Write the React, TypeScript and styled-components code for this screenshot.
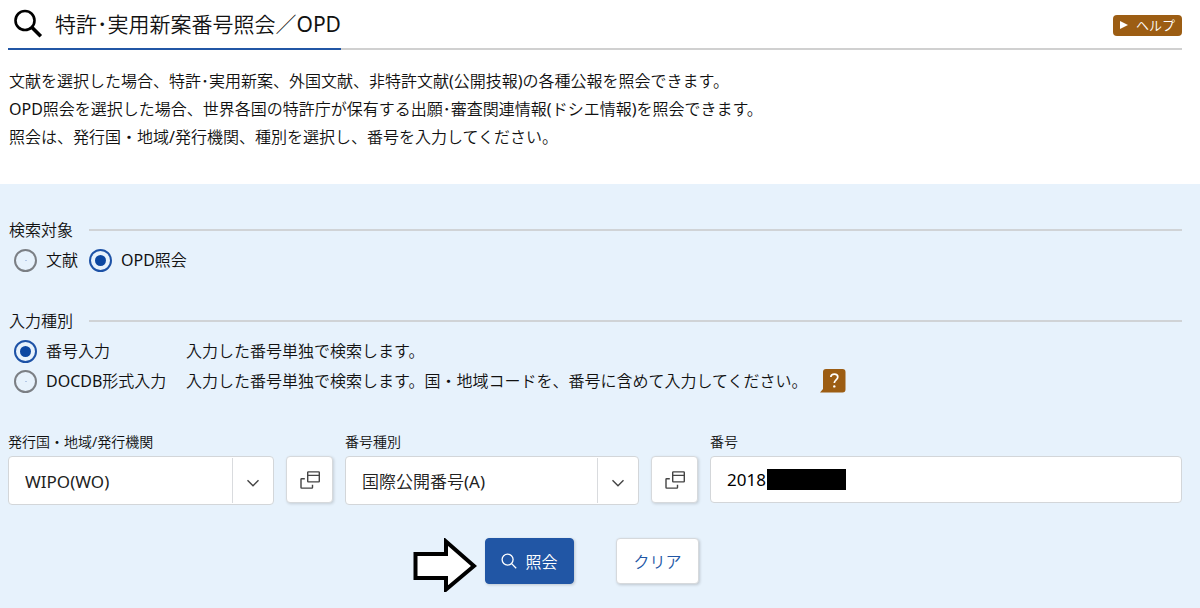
import React from "react";
import styled, { createGlobalStyle } from "styled-components";

const GlobalStyle = createGlobalStyle`
  *, *::before, *::after { box-sizing: border-box; }
  body {
    margin: 0;
    background: #e7f2fc;
    color: #111;
    font-family: "Noto Sans", "Noto Sans CJK JP DemiLight", "Noto Sans CJK JP", sans-serif;
    font-size: 16px;
    font-weight: 400;
  }
  button, input, select { font: inherit; color: inherit; margin: 0; }
`;

const Intro = styled.header`
  background: #fff;
  padding: 0 18px 33px 8px;
`;

const TitleBar = styled.div`
  display: flex;
  align-items: stretch;
  justify-content: space-between;
  height: 50px;
  box-shadow: inset 0 -2px 0 #d0d0d0;
`;

const Title = styled.h1`
  display: flex;
  align-items: center;
  gap: 12px;
  margin: 0;
  padding: 0 0 0 5px;
  border-bottom: 2px solid #2156a5;
  font-size: 21px;
  line-height: 30px;
  font-weight: 400;
`;

const HelpButton = styled.button`
  display: flex;
  align-items: center;
  align-self: center;
  gap: 8px;
  height: 21px;
  padding: 0 7px;
  border: 0;
  border-radius: 4px;
  background: #9c5d13;
  color: #fff;
  font-size: 13px;
  line-height: 20px;
`;

const Lead = styled.p`
  margin: 0;
  padding: 17px 0 0 1px;
  line-height: 28px;
`;

const Form = styled.form`
  padding: 32px 18px 16px 8px;
`;

const Group = styled.fieldset`
  min-width: 0;
  margin: 0 0 32px;
  padding: 0;
  border: 0;
`;

const Legend = styled.legend`
  display: flex;
  align-items: center;
  gap: 16px;
  width: 100%;
  padding: 0 0 1px 1px;
  line-height: 28px;

  &::after {
    content: "";
    flex: 1;
    height: 2px;
    background: #d0d3d6;
  }
`;

const OptionRow = styled.div`
  display: flex;
  align-items: center;
  gap: 11px;
  height: 30px;
  padding-left: 6px;
`;

const Option = styled.label<{ $wide?: boolean }>`
  display: flex;
  align-items: center;
  gap: 9px;
  width: ${(p) => (p.$wide ? "161px" : "auto")};
  line-height: 24px;
  white-space: nowrap;
`;

const Radio = styled.input`
  appearance: none;
  display: grid;
  place-items: center;
  flex: none;
  width: 23px;
  height: 23px;
  border: 2px solid #7b7f84;
  border-radius: 50%;

  &::before {
    content: "";
    width: 2px;
    height: 1px;
    background: #b4c8e6;
  }
  &:checked { border-color: #1d52a6; }
  &:checked::before {
    width: 11px;
    height: 11px;
    border-radius: 50%;
    background: #0c47a1;
  }
`;

const Note = styled.span`
  line-height: 24px;
`;

const HintButton = styled.button`
  display: flex;
  margin-left: 2px;
  padding: 0;
  border: 0;
  background: none;
`;

const Fields = styled.div`
  display: grid;
  grid-template-columns: 325fr 353fr 472fr;
  gap: 12px;
  padding-top: 4px;
`;

const Field = styled.div`
  min-width: 0;
`;

const FieldLabel = styled.label`
  display: block;
  padding-bottom: 4px;
  font-size: 14px;
  line-height: 20px;
`;

const Controls = styled.div`
  display: flex;
  gap: 12px;
`;

const SelectBox = styled.div`
  position: relative;
  flex: 1;
  min-width: 0;
`;

const Select = styled.select`
  appearance: none;
  display: block;
  width: 100%;
  height: 49px;
  padding: 2px 44px 0 16px;
  border: 1px solid #d3d6d9;
  border-radius: 4px;
  background: #fff;
  color: #222;
  font-size: 17px;
`;

const SelectArrow = styled.span`
  position: absolute;
  top: 2px;
  right: 1px;
  bottom: 2px;
  display: grid;
  place-items: center;
  width: 41px;
  padding-top: 4px;
  border-left: 1px solid #d9dbde;
  pointer-events: none;
`;

const PickerButton = styled.button`
  display: grid;
  place-items: center;
  flex: none;
  width: 47px;
  height: 47px;
  padding: 0;
  border: 1px solid #d6d9dc;
  border-radius: 4px;
  background: #fff;
  box-shadow: 1px 1px 3px rgba(0, 0, 0, 0.15);
`;

const NumberBox = styled.div`
  position: relative;
  min-width: 0;
`;

const NumberInput = styled.input`
  display: block;
  width: 100%;
  height: 47px;
  padding: 0 16px;
  border: 1px solid #d3d6d9;
  border-radius: 4px;
  background: #fff;
  color: #000;
  font-size: 17px;
`;

const Redaction = styled.span`
  position: absolute;
  top: 13px;
  left: 57px;
  width: 79px;
  height: 21px;
  background: #000;
`;

const Actions = styled.div`
  display: flex;
  align-items: flex-start;
  justify-content: center;
  margin-top: 33px;
  padding-right: 78px;
`;

const ActionButton = styled.button<{ $primary?: boolean }>`
  display: flex;
  align-items: center;
  justify-content: center;
  gap: 8px;
  width: ${(p) => (p.$primary ? "89px" : "83px")};
  height: 46px;
  margin-left: ${(p) => (p.$primary ? "8px" : "42px")};
  padding: 0;
  border: 1px solid ${(p) => (p.$primary ? "#2156a5" : "#d6d9dc")};
  border-radius: 4px;
  background: ${(p) => (p.$primary ? "#2156a5" : "#fff")};
  color: ${(p) => (p.$primary ? "#fff" : "#2156a5")};
  box-shadow: 1px 1px 3px rgba(0, 0, 0, 0.18);
`;

const ChevronIcon = () => (
  <svg width="14" height="10" viewBox="0 0 14 10" fill="none" stroke="#444" strokeWidth="1.4" aria-hidden="true">
    <path d="M1.500 2.200 7 7.800l5.500-5.600" />
  </svg>
);

const WindowsIcon = () => (
  <svg width="20" height="18" viewBox="0 0 20 18" fill="none" stroke="#444" strokeWidth="1.4" strokeLinejoin="round" aria-hidden="true">
    <rect x="7.700" y="0.900" width="11.600" height="10" rx="0.600" />
    <path d="M7.700 4.400h11.600M4.800 7.700H1.600a.6.6 0 0 0-.6.6v8.200c0 .3.3.6.6.6h10.300c.3 0 .6-.3.6-.6v-2.700" />
  </svg>
);

const PickSelect = ({ id, value }: { id: string; value: string }) => (
  <Controls>
    <SelectBox>
      <Select id={id} defaultValue={value}>
        <option value={value}>{value}</option>
      </Select>
      <SelectArrow>
        <ChevronIcon />
      </SelectArrow>
    </SelectBox>
    <PickerButton type="button">
      <WindowsIcon />
    </PickerButton>
  </Controls>
);

export default function App() {
  return (
    <main>
      <GlobalStyle />
      <Intro>
        <TitleBar>
          <Title>
            <svg width="30" height="30" viewBox="0 0 30 30" fill="none" stroke="#000" aria-hidden="true">
              <circle cx="12" cy="11.500" r="9.500" strokeWidth="2.600" />
              <path d="m18.800 18.300 9 9" strokeWidth="3.600" />
            </svg>
            特許･実用新案番号照会／OPD
          </Title>
          <HelpButton type="button">
            <svg width="8" height="8" viewBox="0 0 8 8" fill="#fff" aria-hidden="true">
              <path d="M0 0l8 4-8 4z" />
            </svg>
            ヘルプ
          </HelpButton>
        </TitleBar>
        <Lead>
          文献を選択した場合、特許･実用新案、外国文献、非特許文献(公開技報)の各種公報を照会できます。
          <br />
          OPD照会を選択した場合、世界各国の特許庁が保有する出願･審査関連情報(ドシエ情報)を照会できます。
          <br />
          照会は、発行国・地域/発行機関、種別を選択し、番号を入力してください。
        </Lead>
      </Intro>
      <Form>
        <Group>
          <Legend>検索対象</Legend>
          <OptionRow>
            <Option>
              <Radio type="radio" name="target" />
              文献
            </Option>
            <Option>
              <Radio type="radio" name="target" defaultChecked />
              OPD照会
            </Option>
          </OptionRow>
        </Group>
        <Group>
          <Legend>入力種別</Legend>
          <OptionRow>
            <Option $wide>
              <Radio type="radio" name="kind" defaultChecked />
              番号入力
            </Option>
            <Note>入力した番号単独で検索します。</Note>
          </OptionRow>
          <OptionRow>
            <Option $wide>
              <Radio type="radio" name="kind" />
              DOCDB形式入力
            </Option>
            <Note>入力した番号単独で検索します。国・地域コードを、番号に含めて入力してください。</Note>
            <HintButton type="button">
              <svg width="26" height="24" viewBox="0 0 26 24" aria-hidden="true">
                <path d="M6 0h16.500a3 3 0 0 1 3 3v17.500a3 3 0 0 1-3 3H0l3-3.500V3a3 3 0 0 1 3-3z" fill="#9c5d13" />
                <path d="M10.800 8c.2-1.900 1.500-2.900 3.500-2.900 2.100 0 3.500 1.100 3.500 2.900 0 2.700-3.500 3-3.500 6" fill="none" stroke="#fff" strokeWidth="1.700" />
                <circle cx="14.300" cy="17.400" r="1.200" fill="#fff" />
              </svg>
            </HintButton>
          </OptionRow>
        </Group>
        <Fields>
          <Field>
            <FieldLabel htmlFor="country">発行国・地域/発行機関</FieldLabel>
            <PickSelect id="country" value="WIPO(WO)" />
          </Field>
          <Field>
            <FieldLabel htmlFor="number-kind">番号種別</FieldLabel>
            <PickSelect id="number-kind" value="国際公開番号(A)" />
          </Field>
          <Field>
            <FieldLabel htmlFor="number">番号</FieldLabel>
            <NumberBox>
              <NumberInput id="number" type="text" defaultValue="2018" />
              <Redaction />
            </NumberBox>
          </Field>
        </Fields>
        <Actions>
          <svg width="64" height="54" viewBox="0 0 64 54" aria-hidden="true">
            <path d="M2.500 16H33V3.500L61 28 33 51.500V40H2.500z" fill="#fff" stroke="#000" strokeWidth="4" />
          </svg>
          <ActionButton type="submit" $primary>
            <svg width="16" height="16" viewBox="0 0 16 16" fill="none" stroke="#fff" strokeWidth="1.300" aria-hidden="true">
              <circle cx="6.600" cy="6.600" r="5.500" />
              <path d="m10.600 10.600 4.600 4.600" />
            </svg>
            照会
          </ActionButton>
          <ActionButton type="button">クリア</ActionButton>
        </Actions>
      </Form>
    </main>
  );
}
